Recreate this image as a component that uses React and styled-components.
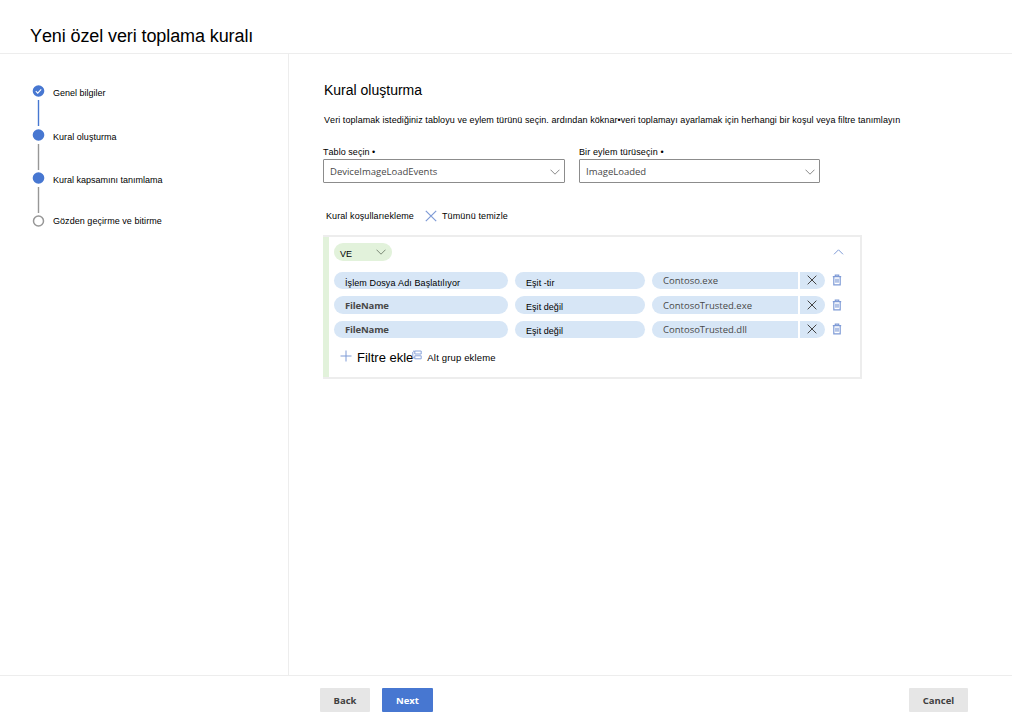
import React from 'react'

import styled, { createGlobalStyle } from 'styled-components'

const Colors = {
  blue: '#4777d1',
  blueSoft: '#7f9bd6',
  pill: '#d7e6f6',
  green: '#e2f2db',
  line: '#ededed',
  grey: '#979797',
  control: '#8c8c8c',
  button: '#e6e6e6',
  text: '#000',
  textSoft: '#484848',
}

const GlobalStyle = createGlobalStyle`
  * {
    box-sizing: border-box;
  }
  body {
    margin: 0;
    background: #fff;
    color: ${Colors.text};
    font-family: 'Liberation Sans', Arial, sans-serif;
    font-size: 9px;
    line-height: 12px;
    font-kerning: none;
  }
  svg {
    display: block;
    flex: none;
  }
`

const Page = styled.div`
  display: flex;
  flex-direction: column;
  width: 1012px;
  height: 720px;
  overflow: hidden;
`

const Header = styled.header`
  height: 54px;
  padding: 25px 0 0 30px;
  border-bottom: 1px solid ${Colors.line};
`

const Title = styled.h1`
  margin: 0;
  font-size: 18px;
  font-weight: 400;
  line-height: 22px;
  letter-spacing: -0.1px;
`

const Body = styled.div`
  display: flex;
  flex: 1;
`

const Sidebar = styled.nav`
  width: 289px;
  padding: 31px 0 0 32px;
  border-right: 1px solid ${Colors.line};
`

const Step = styled.div`
  display: flex;
  gap: 8px;
  height: ${props => props.height}px;
`

const Label = styled.span`
  display: block;
  white-space: nowrap;
  font-size: ${props => props.size || 9}px;
  letter-spacing: ${props => props.track || 0}px;
  margin-top: ${props => props.top || 0}px;
`

const Main = styled.main`
  flex: 1;
  padding: 27px 0 0 35px;
`

const SectionTitle = styled.h2`
  margin: 0 0 15px;
  font-size: 14px;
  font-weight: 400;
  line-height: 18px;
`

const Fields = styled.div`
  display: flex;
  gap: 14px;
  margin: 20px 0 0 -1px;
`

const Field = styled.div`
  width: ${props => props.width}px;
`

const Select = styled.div`
  display: flex;
  align-items: center;
  justify-content: space-between;
  height: 24px;
  margin-top: 1px;
  padding: 1px 4.5px 0 6px;
  border: 1px solid ${Colors.control};
  border-radius: 1px;
`

const Value = styled.span`
  display: block;
  padding-top: ${props => props.top || 0}px;
  font-family: 'Open Sans', 'Noto Sans', sans-serif;
  font-size: 9.5px;
  font-weight: ${props => (props.strong ? 700 : 400)};
  letter-spacing: ${props => (props.strong ? -0.15 : 0)}px;
  color: ${Colors.textSoft};
  white-space: nowrap;
`

const Toolbar = styled.div`
  display: flex;
  align-items: flex-start;
  gap: 11px;
  margin: 27px 0 13px 2px;
`

const ClearAll = styled.div`
  display: flex;
  gap: 5px;
`

const RuleCard = styled.section`
  display: flex;
  width: 539px;
  height: 144px;
  margin-left: -1px;
  border: 2px solid ${Colors.line};
  border-left: 0;
`

const GroupBar = styled.div`
  width: 6px;
  background: ${Colors.green};
`

const RuleContent = styled.div`
  flex: 1;
  padding: 6px 16px 0 5px;
`

const GroupHeader = styled.div`
  display: flex;
  align-items: flex-start;
  justify-content: space-between;
  margin-bottom: 10.5px;
`

const Operator = styled.div`
  display: flex;
  justify-content: space-between;
  width: 58px;
  height: 18px;
  padding: 0 6px;
  border-radius: 9px;
  background: ${Colors.green};
`

const Condition = styled.div`
  display: flex;
  height: 17.5px;
  margin-bottom: 7px;
`

const Pill = styled.div`
  width: ${props => props.width}px;
  margin-right: ${props => (props.joined ? 1.5 : 7)}px;
  padding-left: 11px;
  line-height: 17.5px;
  border-radius: ${props => (props.joined ? '9px 0 0 9px' : '9px')};
  background: ${Colors.pill};
`

const ClearValue = styled.div`
  display: flex;
  align-items: center;
  width: 25.5px;
  margin-right: 7px;
  padding-left: 7px;
  border-radius: 0 9px 9px 0;
  background: ${Colors.pill};
`

const Actions = styled.div`
  display: flex;
  align-items: flex-start;
  padding: 5px 0 0 6px;
`

const AddFilter = styled.span`
  margin: 0 -1px 0 5px;
  font-size: 13px;
  line-height: 16px;
  white-space: nowrap;
`

const AddSubgroup = styled.div`
  display: flex;
  gap: 5px;
`

const Footer = styled.footer`
  display: flex;
  height: 45px;
  padding: 12px 44px 0 320px;
  border-top: 1px solid ${Colors.line};
`

const Button = styled.button`
  width: ${props => props.width}px;
  height: 24px;
  padding: 1px 0 0;
  border: 0;
  border-radius: 1px;
  margin-left: ${props => props.space || 0};
  background: ${props => (props.primary ? Colors.blue : Colors.button)};
  color: ${props => (props.primary ? '#fff' : '#404040')};
  font-family: 'Open Sans', 'Noto Sans', sans-serif;
  font-size: 9.5px;
  font-weight: 700;
`

const StepMarker = ({ state, next }) => (
  <svg width="13" height="43" viewBox="0 0 13 43" fill="none">
    {state === 'open' ? (
      <circle cx="6.5" cy="6" r="5" stroke={Colors.grey} strokeWidth="1.5" />
    ) : (
      <circle cx="6.5" cy="6" r="5.8" fill={Colors.blue} />
    )}
    {state === 'done' && (
      <path d="M3.8 6.2l1.9 1.9 3.5-3.8" stroke="#fff" strokeWidth="1.1" />
    )}
    {next && <path d="M6.5 15v26" stroke={next} strokeWidth="1.4" />}
  </svg>
)

const Chevron = ({ up, color = '#8a8a8a', width = 10 }) => (
  <svg width={width} height="6" viewBox="0 0 10 6" fill="none">
    <path d={up ? 'M.5 5.3L5 .8l4.5 4.5' : 'M.5.7L5 5.2 9.5.7'} stroke={color} />
  </svg>
)

const Cross = ({ size, color }) => (
  <svg width={size} height={size} viewBox="0 0 12 12" fill="none">
    <path d="M.8.8l10.4 10.4M11.2.8L.8 11.2" stroke={color} strokeWidth="1.2" />
  </svg>
)

const Trash = () => (
  <svg width="10" height="12" viewBox="0 0 10 12" fill="none">
    <path
      d="M.8 2.6h8.4M3.3 2.4V1.1h3.4v1.3M1.8 2.8v8h6.4v-8M4 4.8v4M6 4.8v4"
      stroke={Colors.blueSoft}
      strokeWidth="1.2"
    />
  </svg>
)

const Plus = () => (
  <svg width="12" height="12" viewBox="0 0 12 12">
    <path d="M6 .5v11M.5 6h11" stroke={Colors.blueSoft} />
  </svg>
)

const Subgroup = () => (
  <svg width="10" height="10" viewBox="0 0 10 10" fill="none">
    <path
      d="M2.8 1h6.4v3H2.8zM2.8 5.8h6.4v3H2.8zM2.6 1.2H1M.8 2v5.8h1.8"
      stroke={Colors.blueSoft}
      strokeWidth=".9"
    />
  </svg>
)

const steps = [
  { text: 'Genel bilgiler', state: 'done', next: Colors.blue, height: 43.5, top: 2 },
  { text: 'Kural oluşturma', next: Colors.grey, height: 43, top: 2, track: 0.04 },
  { text: 'Kural kapsamını tanımlama', next: Colors.grey, height: 43.5, top: 2 },
  { text: 'Gözden geçirme ve bitirme', state: 'open', height: 43, top: 0, track: 0.05 },
]

const conditions = [
  { field: 'İşlem Dosya Adı Başlatılıyor', localized: true, operator: 'Eşit -tir', value: 'Contoso.exe' },
  { field: 'FileName', operator: 'Eşit değil', value: 'ContosoTrusted.exe' },
  { field: 'FileName', operator: 'Eşit değil', value: 'ContosoTrusted.dll' },
]

const App = () => (
  <Page>
    <GlobalStyle />
    <Header>
      <Title>Yeni özel veri toplama kuralı</Title>
    </Header>
    <Body>
      <Sidebar>
        {steps.map(step => (
          <Step key={step.text} height={step.height}>
            <StepMarker state={step.state} next={step.next} />
            <Label top={step.top} track={step.track}>{step.text}</Label>
          </Step>
        ))}
      </Sidebar>
      <Main>
        <SectionTitle>Kural oluşturma</SectionTitle>
        <Label track={0.068}>
          Veri toplamak istediğiniz tabloyu ve eylem türünü seçin. ardından köknar•veri toplamayı ayarlamak için herhangi bir koşul veya filtre tanımlayın
        </Label>
        <Fields>
          <Field width={242}>
            <Label track={0.05}>Tablo seçin •</Label>
            <Select>
              <Value>DeviceImageLoadEvents</Value>
              <Chevron />
            </Select>
          </Field>
          <Field width={241}>
            <Label track={0.12}>Bir eylem türüseçin •</Label>
            <Select>
              <Value>ImageLoaded</Value>
              <Chevron />
            </Select>
          </Field>
        </Fields>
        <Toolbar>
          <Label track={0.09}>Kural koşullarıekleme</Label>
          <ClearAll>
            <Cross size={12} color={Colors.blueSoft} />
            <Label track={0.14}>Tümünü temizle</Label>
          </ClearAll>
        </Toolbar>
        <RuleCard>
          <GroupBar />
          <RuleContent>
            <GroupHeader>
              <Operator>
                <Label top={5}>VE</Label>
                <Label top={6}>
                  <Chevron color="#7c8a78" />
                </Label>
              </Operator>
              <Label top={6}>
                <Chevron up width={11} color={Colors.blueSoft} />
              </Label>
            </GroupHeader>
            {conditions.map(({ field, localized, operator, value }) => (
              <Condition key={value}>
                <Pill width={174}>
                  {localized ? (
                    <Label top={3} track={0.09}>{field}</Label>
                  ) : (
                    <Value top={0.75} strong>{field}</Value>
                  )}
                </Pill>
                <Pill width={130}>
                  <Label top={localized ? 3 : 2.5} track={0.05}>{operator}</Label>
                </Pill>
                <Pill width={146} joined>
                  <Value top={0.75}>{value}</Value>
                </Pill>
                <ClearValue>
                  <Cross size={10} color="#444" />
                </ClearValue>
                <Label top={2.5}>
                  <Trash />
                </Label>
              </Condition>
            ))}
            <Actions>
              <Plus />
              <AddFilter>Filtre ekle</AddFilter>
              <AddSubgroup>
                <Subgroup />
                <Label top={2} size={9.5} track={0.16}>Alt grup ekleme</Label>
              </AddSubgroup>
            </Actions>
          </RuleContent>
        </RuleCard>
      </Main>
    </Body>
    <Footer>
      <Button width={50}>Back</Button>
      <Button width={51} space="12px" primary>Next</Button>
      <Button width={59} space="auto">Cancel</Button>
    </Footer>
  </Page>
)

export default App
